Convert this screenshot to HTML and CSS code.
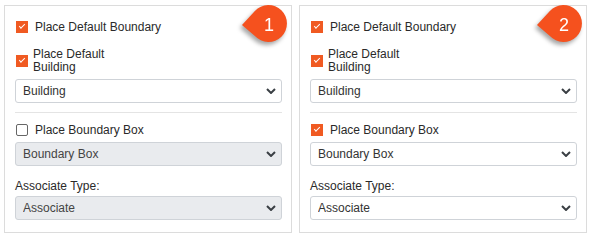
FILE: index.html
```html
<!DOCTYPE html>
<html>
<head>
<meta charset="utf-8">
<link rel="stylesheet" href="styles.css">
</head>
<body>
<div class="wrap">
  <section class="panel">
    <svg class="badge" width="52" height="48" viewBox="0 0 52 48">
      <path class="drop" d="M6 22 L18.9 7.9 A18.5 18.5 0 1 1 18.9 33.1 Z"/>
      <text x="33" y="27.5" class="num">1</text>
    </svg>
    <label class="check row1"><input type="checkbox" checked><span>Place Default Boundary</span></label>
    <label class="check row2"><input type="checkbox" checked><span class="narrow">Place Default Building</span></label>
    <div class="select sel1">
      <select><option>Building</option></select>
      <svg class="chev" width="10" height="6" viewBox="0 0 10 6"><path d="M1 1 L5 5 L9 1"/></svg>
    </div>
    <div class="sep"></div>
    <label class="check row3"><input type="checkbox"><span>Place Boundary Box</span></label>
    <div class="select sel2 disabled">
      <select disabled><option>Boundary Box</option></select>
      <svg class="chev" width="10" height="6" viewBox="0 0 10 6"><path d="M1 1 L5 5 L9 1"/></svg>
    </div>
    <div class="field-label">Associate Type:</div>
    <div class="select sel3 disabled">
      <select disabled><option>Associate</option></select>
      <svg class="chev" width="10" height="6" viewBox="0 0 10 6"><path d="M1 1 L5 5 L9 1"/></svg>
    </div>
  </section>
  <section class="panel">
    <svg class="badge" width="52" height="48" viewBox="0 0 52 48">
      <path class="drop" d="M6 22 L18.9 7.9 A18.5 18.5 0 1 1 18.9 33.1 Z"/>
      <text x="33" y="27.5" class="num">2</text>
    </svg>
    <label class="check row1"><input type="checkbox" checked><span>Place Default Boundary</span></label>
    <label class="check row2"><input type="checkbox" checked><span class="narrow">Place Default Building</span></label>
    <div class="select sel1">
      <select><option>Building</option></select>
      <svg class="chev" width="10" height="6" viewBox="0 0 10 6"><path d="M1 1 L5 5 L9 1"/></svg>
    </div>
    <div class="sep"></div>
    <label class="check row3"><input type="checkbox" checked><span>Place Boundary Box</span></label>
    <div class="select sel2">
      <select><option>Boundary Box</option></select>
      <svg class="chev" width="10" height="6" viewBox="0 0 10 6"><path d="M1 1 L5 5 L9 1"/></svg>
    </div>
    <div class="field-label">Associate Type:</div>
    <div class="select sel3">
      <select><option>Associate</option></select>
      <svg class="chev" width="10" height="6" viewBox="0 0 10 6"><path d="M1 1 L5 5 L9 1"/></svg>
    </div>
  </section>
</div>
</body>
</html>
```
FILE: styles.css
```css
html, body {
  margin: 0;
  padding: 0;
  background: #fff;
}
body {
  font-family: "Liberation Sans", Arial, sans-serif;
  font-size: 12px;
  color: #2a2a2a;
}
.wrap {
  display: flex;
  gap: 7px;
  padding: 5px 0 0 4px;
}
.panel {
  position: relative;
  box-sizing: border-box;
  width: 288px;
  height: 228px;
  border: 1px solid #dcdcdc;
  padding: 14px 9px 0 10px;
  display: flex;
  flex-direction: column;
}
.badge {
  position: absolute;
  left: 231px;
  top: -3px;
  overflow: visible;
  filter: drop-shadow(-2px 3px 2px rgba(0, 0, 0, 0.35));
}
.drop {
  fill: #f5511e;
}
.num {
  fill: #fff;
  font-family: "Liberation Sans", Arial, sans-serif;
  font-size: 18px;
  text-anchor: middle;
}
.check {
  display: flex;
  align-items: center;
  gap: 7px;
  line-height: 14px;
}
.check input {
  appearance: none;
  -webkit-appearance: none;
  box-sizing: border-box;
  width: 12px;
  height: 12px;
  margin: 0 0 0 1px;
  flex: none;
  position: relative;
  border: 1px solid #666;
  border-radius: 2px;
  background: #fff;
}
.check input:checked {
  background: #f05a22;
  border-color: #f05a22;
  border-radius: 0;
}
.check input:checked::after {
  content: "";
  position: absolute;
  left: 2px;
  top: 2px;
  width: 5px;
  height: 2px;
  border-left: 1.5px solid #fff;
  border-bottom: 1.5px solid #fff;
  transform: rotate(-45deg);
}
.row1 {
  height: 14px;
}
.row2 {
  margin-top: 14px;
  gap: 5px;
  line-height: 13px;
}
.narrow {
  max-width: 90px;
}
.select {
  position: relative;
  height: 24px;
}
.select select {
  appearance: none;
  -webkit-appearance: none;
  box-sizing: border-box;
  width: 100%;
  height: 24px;
  margin: 0;
  padding: 0 0 0 7px;
  border: 1px solid #cfd3d8;
  border-radius: 3px;
  background: #fff;
  font-family: "Liberation Sans", Arial, sans-serif;
  font-size: 12px;
  color: #333;
  opacity: 1;
}
.select.disabled select {
  background: #e9ebee;
  color: #444;
}
.chev {
  position: absolute;
  right: 6px;
  top: 9px;
  pointer-events: none;
}
.chev path {
  fill: none;
  stroke: #3a3f44;
  stroke-width: 2;
}
.sel1 {
  margin-top: 5px;
}
.sep {
  height: 1px;
  background: #e4e4e4;
  margin-top: 9px;
}
.row3 {
  margin-top: 10px;
  height: 14px;
}
.sel2 {
  margin-top: 5px;
}
.field-label {
  margin-top: 13px;
  line-height: 14px;
}
.sel3 {
  margin-top: 3px;
}
```
